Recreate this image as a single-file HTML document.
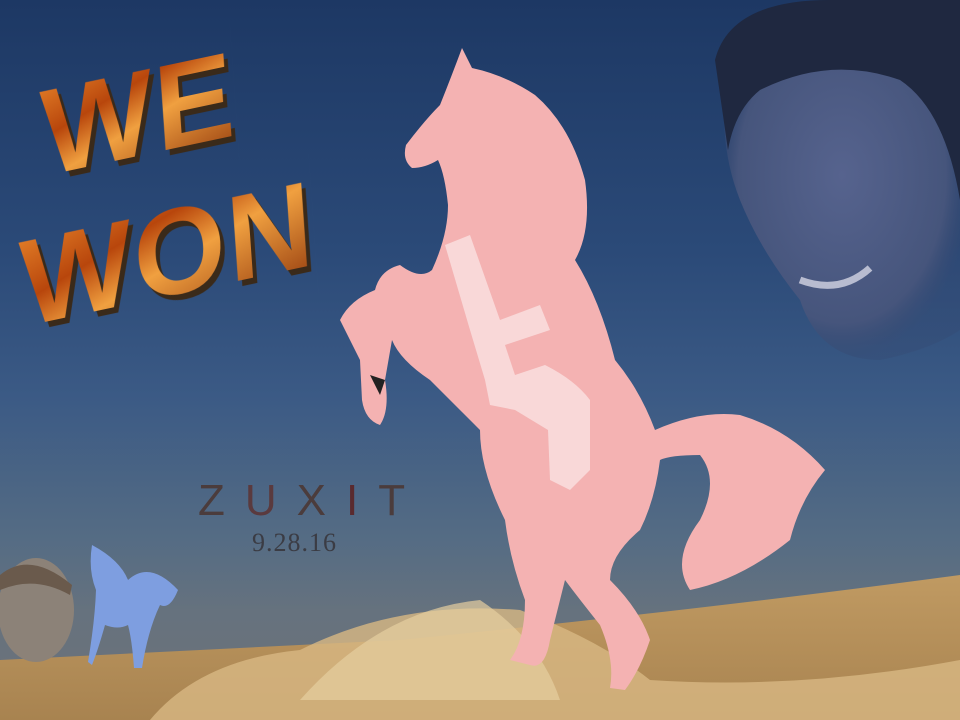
<!DOCTYPE html>
<html><head><style>
html,body{margin:0;padding:0}
body{width:960px;height:720px;overflow:hidden;position:relative;font-family:"Liberation Sans",sans-serif;
background:linear-gradient(180deg,#1d3864 0%,#2b4a78 35%,#3b5a85 55%,#556c84 75%,#66727e 85%,#6e7278 100%);}
.w{position:absolute;font-weight:900;font-size:120px;font-family:"Liberation Sans",sans-serif;letter-spacing:2px;
background:linear-gradient(160deg,#f09030,#b8460c 35%,#f0a040 55%,#8a3008);-webkit-background-clip:text;background-clip:text;color:transparent;
filter:drop-shadow(4px 6px 0 #3a2a1a);}
.z{position:absolute;left:198px;top:476px;font-size:44px;letter-spacing:20px;color:#4b3c3c;font-family:"Liberation Sans",sans-serif;}
.d{position:absolute;left:252px;top:528px;font-size:26px;color:#3b3c44;letter-spacing:1px;font-family:"Liberation Serif",serif;}
</style></head><body>
<svg width="960" height="720" style="position:absolute;left:0;top:0">
<defs>
<radialGradient id="f" cx="50%" cy="45%" r="55%"><stop offset="0" stop-color="#56638e"/><stop offset="0.8" stop-color="#46557c"/><stop offset="1" stop-color="#34466e" stop-opacity="0.3"/></radialGradient>
<linearGradient id="s" x1="0" y1="0" x2="0" y2="1"><stop offset="0" stop-color="#c09a62"/><stop offset="1" stop-color="#a88350"/></linearGradient>
</defs>
<!-- face top right -->
<path d="M725 90 Q740 30 820 25 Q930 20 960 60 L960 330 Q930 350 880 360 Q820 360 800 300 Q760 250 740 200 Q720 150 725 90Z" fill="url(#f)"/>
<path d="M715 60 Q730 0 830 0 L960 0 L960 200 Q945 110 900 80 Q830 55 760 90 Q735 110 728 150 Z" fill="#1f2840"/>
<path d="M800 280 Q840 295 870 268" stroke="#b8bcd0" stroke-width="7" fill="none"/>
<!-- dunes -->
<path d="M0 660 Q200 650 400 640 Q700 610 960 575 L960 720 L0 720 Z" fill="url(#s)"/>
<path d="M150 720 Q200 660 300 650 Q400 600 520 610 Q600 640 650 680 Q800 690 960 660 L960 720 Z" fill="#d8b883" opacity="0.8"/>
<path d="M300 700 Q380 610 480 600 Q540 640 560 700 Z" fill="#e6cfa0" opacity="0.7"/>
<!-- small face -->
<ellipse cx="36" cy="610" rx="38" ry="52" fill="#8c8278"/>
<path d="M0 575 Q30 550 72 585 L70 595 Q35 575 0 590Z" fill="#6a5a4c"/>
<!-- blue horse -->
<path d="M92 545 Q120 560 128 580 Q150 560 178 590 Q170 610 160 605 Q148 630 142 668 L134 668 Q132 640 128 625 Q118 630 105 625 Q98 650 92 665 L88 662 Q95 620 96 590 Q88 570 92 545Z" fill="#7e9ee0"/>
<!-- pink horse -->
<path d="M462 48 L472 68 Q505 75 535 95 Q570 125 585 180 Q592 230 575 260 Q600 300 615 360 Q640 390 655 430 Q700 410 740 415 Q790 430 825 470 Q800 500 790 540 Q740 580 690 590 Q670 560 700 520 Q720 480 700 455 Q670 455 660 460 Q655 500 640 530 Q610 555 610 580 Q640 610 650 640 Q640 670 625 690 L610 688 Q615 660 600 625 Q580 600 565 580 L550 640 Q545 670 530 665 L510 660 Q525 640 525 600 Q510 560 505 520 Q480 470 480 430 Q450 400 430 380 Q400 360 392 340 L385 380 Q390 410 380 425 Q365 420 362 400 L360 360 Q350 340 340 320 Q350 300 375 290 Q380 270 400 265 Q420 280 432 270 Q448 235 448 205 Q445 175 438 160 Q425 168 412 168 Q402 160 406 145 Q425 120 440 105 Q452 75 462 48Z" fill="#f4b2b2"/>
<path d="M445 245 L470 235 L500 320 L540 305 L550 330 L505 345 L515 375 L545 365 Q575 380 590 400 L590 470 L570 490 L550 480 L548 430 L515 410 L490 405 L485 380 L470 330 Z" fill="#f9dede" opacity="0.85"/>
<path d="M370 375 L385 380 L380 395 Z" fill="#222"/>
</svg>
<div class="w" style="left:40px;top:45px;transform:rotate(-12deg) skewX(-8deg);">WE</div>
<div class="w" style="left:18px;top:185px;transform:rotate(-12deg) skewX(-8deg);">WON</div>
<div class="z">Z<span style="color:#5a3a3e">U</span>X<span style="color:#5a2a2e">I</span>T</div>
<div class="d">9.28.16</div>
</body></html>
